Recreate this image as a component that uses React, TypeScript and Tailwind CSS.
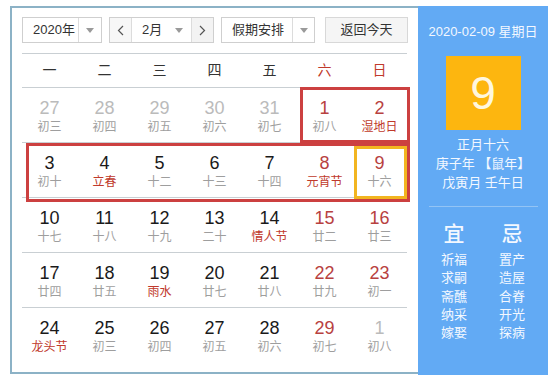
import React from "react";

type Cell = { n: number; l: string; gray?: boolean; redN?: boolean; redL?: boolean };

const rows: Cell[][] = [
  [
    { n: 27, l: "初三", gray: true },
    { n: 28, l: "初四", gray: true },
    { n: 29, l: "初五", gray: true },
    { n: 30, l: "初六", gray: true },
    { n: 31, l: "初七", gray: true },
    { n: 1, l: "初八", redN: true },
    { n: 2, l: "湿地日", redN: true, redL: true },
  ],
  [
    { n: 3, l: "初十" },
    { n: 4, l: "立春", redL: true },
    { n: 5, l: "十二" },
    { n: 6, l: "十三" },
    { n: 7, l: "十四" },
    { n: 8, l: "元宵节", redN: true, redL: true },
    { n: 9, l: "十六", redN: true },
  ],
  [
    { n: 10, l: "十七" },
    { n: 11, l: "十八" },
    { n: 12, l: "十九" },
    { n: 13, l: "二十" },
    { n: 14, l: "情人节", redL: true },
    { n: 15, l: "廿二", redN: true },
    { n: 16, l: "廿三", redN: true },
  ],
  [
    { n: 17, l: "廿四" },
    { n: 18, l: "廿五" },
    { n: 19, l: "雨水", redL: true },
    { n: 20, l: "廿七" },
    { n: 21, l: "廿八" },
    { n: 22, l: "廿九", redN: true },
    { n: 23, l: "初一", redN: true },
  ],
  [
    { n: 24, l: "龙头节", redL: true },
    { n: 25, l: "初三" },
    { n: 26, l: "初四" },
    { n: 27, l: "初五" },
    { n: 28, l: "初六" },
    { n: 29, l: "初七", redN: true },
    { n: 1, l: "初八", gray: true },
  ],
];

const weekdays = ["一", "二", "三", "四", "五", "六", "日"];

function Caret() {
  return (
    <svg width="8" height="5" viewBox="0 0 8 5">
      <path d="M0 0 L8 0 L4 5 Z" fill="#9a9a9a" />
    </svg>
  );
}

function Chevron({ dir }: { dir: "l" | "r" }) {
  return (
    <svg width="7" height="11" viewBox="0 0 7 11">
      <path
        d={dir === "l" ? "M6 1 L1.5 5.5 L6 10" : "M1 1 L5.5 5.5 L1 10"}
        fill="none"
        stroke="#555"
        strokeWidth="1.2"
      />
    </svg>
  );
}

export default function App() {
  return (
    <div
      className="w-[556px] h-[385px] bg-white"
      style={{ fontFamily: '"Liberation Sans", "Noto Sans CJK SC", sans-serif' }}
    >
      <div className="flex items-start pl-[10px] pt-[6px]">
        {/* Left calendar panel */}
        <div className="relative w-[408px] h-[368px] border-2 border-r-0 border-[#8cb2c6] pt-[9px] pl-[10px]">
          {/* toolbar */}
          <div className="flex h-[26px] items-stretch text-[13px] text-[#333]">
            <div className="flex w-[80px] border border-[#cfcfcf]">
              <div className="flex flex-1 items-center pl-[10px]">2020年</div>
              <div className="flex w-[23px] items-center justify-center border-l border-[#dcdcdc]">
                <Caret />
              </div>
            </div>
            <div className="ml-[7px] flex w-[105px] border border-[#cfcfcf]">
              <div className="flex w-[22px] items-center justify-center border-r border-[#dcdcdc] bg-[#f7f7f7]">
                <Chevron dir="l" />
              </div>
              <div className="flex flex-1 items-center justify-between pl-[10px] pr-[8px]">
                <span>2月</span>
                <Caret />
              </div>
              <div className="flex w-[22px] items-center justify-center border-l border-[#dcdcdc] bg-[#f3f3f3]">
                <Chevron dir="r" />
              </div>
            </div>
            <div className="ml-[7px] flex w-[94px] border border-[#cfcfcf]">
              <div className="flex flex-1 items-center pl-[10px]">假期安排</div>
              <div className="flex w-[22px] items-center justify-center border-l border-[#dcdcdc]">
                <Caret />
              </div>
            </div>
            <div className="ml-[10px] flex w-[83px] items-center justify-center border border-[#d8d8d8] bg-[#f5f5f5]">
              返回今天
            </div>
          </div>
          <div className="h-[11px] w-[385px] border-b border-[#c9cfd3]" />
          {/* weekday header */}
          <div className="grid h-[34px] w-[385px] grid-cols-7 border-b border-[#c9cfd3] text-[14px]">
            {weekdays.map((w, i) => (
              <div
                key={w}
                className={`flex items-center justify-center ${i >= 5 ? "text-[#c0392b]" : "text-[#333]"}`}
              >
                {w}
              </div>
            ))}
          </div>
          {/* rows */}
          {rows.map((row, ri) => (
            <div
              key={ri}
              className={`grid h-[55px] w-[385px] grid-cols-7 ${ri < 4 ? "border-b border-[#c9cfd3]" : ""}`}
            >
              {row.map((c, ci) => (
                <div key={ci} className="flex flex-col items-center pt-[10px]">
                  <div
                    className={`text-[18px] leading-[20px] ${
                      c.gray ? "text-[#bbbbbb]" : c.redN ? "text-[#b8413f]" : "text-[#1a1a1a]"
                    }`}
                  >
                    {c.n}
                  </div>
                  <div
                    className={`mt-[1px] text-[12px] leading-[16px] ${
                      c.redL ? "text-[#c0392b]" : "text-[#9e9e9e]"
                    }`}
                  >
                    {c.l}
                  </div>
                </div>
              ))}
            </div>
          ))}
          {/* annotation boxes */}
          <div className="absolute left-[288px] top-[79px] h-[56px] w-[110px] border-[3px] border-[#cc4040]" />
          <div className="absolute left-[14px] top-[135px] h-[59px] w-[384px] border-[3px] border-[#cc4040]" />
          <div className="absolute left-[342px] top-[138px] h-[53px] w-[53px] border-[3px] border-[#f2b520]" />
        </div>
        {/* Right info panel */}
        <div className="flex h-[369px] w-[130px] flex-col items-center bg-[#62aaf4] text-[#f3f8ff]">
          <div className="mt-[17px] text-[13px] leading-[18px]">2020-02-09 星期日</div>
          <div className="mt-[15px] flex h-[74px] w-[75px] items-center justify-center bg-[#fdb60f] text-[46px] text-[#fff7df]">
            9
          </div>
          <div className="mt-[5px] text-[13px] leading-[19px]">正月十六</div>
          <div className="text-[13px] leading-[19px]">庚子年 【鼠年】</div>
          <div className="text-[13px] leading-[19px]">戊寅月 壬午日</div>
          <div className="mt-[14px] h-px w-[109px] bg-[#93c4f5]" />
          <div className="mt-[14px] flex w-[110px] justify-between px-[6px]">
            <div className="flex w-[40px] flex-col items-center">
              <div className="text-[21px] font-medium leading-[26px]">宜</div>
              <div className="mt-[4px] text-[13px] leading-[18.3px] text-center">
                祈福<br />求嗣<br />斋醮<br />纳采<br />嫁娶
              </div>
            </div>
            <div className="flex w-[40px] flex-col items-center">
              <div className="text-[21px] font-medium leading-[26px]">忌</div>
              <div className="mt-[4px] text-[13px] leading-[18.3px] text-center">
                置产<br />造屋<br />合脊<br />开光<br />探病
              </div>
            </div>
          </div>
        </div>
      </div>
    </div>
  );
}
